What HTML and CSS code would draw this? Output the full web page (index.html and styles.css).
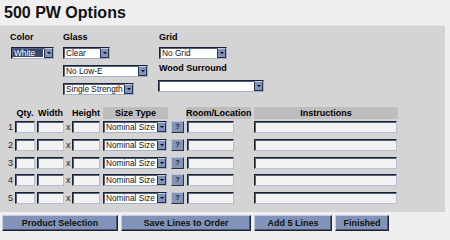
FILE: index.html
```html
<!DOCTYPE html>
<html>
<head>
<meta charset="utf-8">
<title>500 PW Options</title>
<link rel="stylesheet" href="styles.css">
</head>
<body>
<h1 class="title">500 PW Options</h1>
<div class="panel">
  <div class="opts">
    <div class="col col-color">
      <div class="lbl">Color</div>
      <div class="sel sel-color focused"><span class="val">White</span><span class="arr"></span></div>
    </div>
    <div class="col col-glass">
      <div class="lbl">Glass</div>
      <div class="sel sel-clear"><span class="val">Clear</span><span class="arr"></span></div>
      <div class="sel sel-lowe"><span class="val">No Low-E</span><span class="arr"></span></div>
      <div class="sel sel-single"><span class="val">Single Strength</span><span class="arr"></span></div>
    </div>
    <div class="col col-grid">
      <div class="lbl">Grid</div>
      <div class="sel sel-grid"><span class="val">No Grid</span><span class="arr"></span></div>
      <div class="lbl lbl-wood">Wood Surround</div>
      <div class="sel sel-wood"><span class="val"></span><span class="arr"></span></div>
    </div>
  </div>

  <div class="lines">
    <div class="trow thead">
      <span></span>
      <span class="th th-qty">Qty.</span>
      <span class="th th-width">Width</span>
      <span></span>
      <span class="th th-height">Height</span>
      <span class="th dark th-size">Size Type</span>
      <span></span>
      <span class="th dark th-room">Room/Location</span>
      <span class="th dark th-instr">Instructions</span>
    </div>
    <div class="rows">
      <div class="trow">
        <span class="num">1</span>
        <span class="inp in-qty"></span>
        <span class="inp in-width"></span>
        <span class="times">x</span>
        <span class="inp in-height"></span>
        <div class="sel sel-size"><span class="val">Nominal Size</span><span class="arr"></span></div>
        <span class="help">?</span>
        <span class="inp in-room"></span>
        <span class="inp in-instr"></span>
      </div>
      <div class="trow">
        <span class="num">2</span>
        <span class="inp in-qty"></span>
        <span class="inp in-width"></span>
        <span class="times">x</span>
        <span class="inp in-height"></span>
        <div class="sel sel-size"><span class="val">Nominal Size</span><span class="arr"></span></div>
        <span class="help">?</span>
        <span class="inp in-room"></span>
        <span class="inp in-instr"></span>
      </div>
      <div class="trow">
        <span class="num">3</span>
        <span class="inp in-qty"></span>
        <span class="inp in-width"></span>
        <span class="times">x</span>
        <span class="inp in-height"></span>
        <div class="sel sel-size"><span class="val">Nominal Size</span><span class="arr"></span></div>
        <span class="help">?</span>
        <span class="inp in-room"></span>
        <span class="inp in-instr"></span>
      </div>
      <div class="trow">
        <span class="num">4</span>
        <span class="inp in-qty"></span>
        <span class="inp in-width"></span>
        <span class="times">x</span>
        <span class="inp in-height"></span>
        <div class="sel sel-size"><span class="val">Nominal Size</span><span class="arr"></span></div>
        <span class="help">?</span>
        <span class="inp in-room"></span>
        <span class="inp in-instr"></span>
      </div>
      <div class="trow">
        <span class="num">5</span>
        <span class="inp in-qty"></span>
        <span class="inp in-width"></span>
        <span class="times">x</span>
        <span class="inp in-height"></span>
        <div class="sel sel-size"><span class="val">Nominal Size</span><span class="arr"></span></div>
        <span class="help">?</span>
        <span class="inp in-room"></span>
        <span class="inp in-instr"></span>
      </div>
    </div>
  </div>
</div>
<div class="actions">
  <button class="btn btn-product">Product Selection</button>
  <button class="btn btn-save">Save Lines to Order</button>
  <button class="btn btn-add">Add 5 Lines</button>
  <button class="btn btn-finish">Finished</button>
</div>
</body>
</html>
```

FILE: styles.css
```css
html, body {
  margin: 0;
  padding: 0;
}
body {
  width: 450px;
  height: 240px;
  overflow: hidden;
  background: #efefef;
  font-family: "Liberation Sans", Arial, sans-serif;
  color: #000;
}
.title {
  margin: 0;
  height: 25px;
  box-sizing: border-box;
  padding: 3px 0 0 4px;
  font-size: 16px;
  line-height: 19px;
  font-weight: bold;
  color: #111;
}
.panel {
  width: 445px;
  box-sizing: border-box;
  background: #d4d4d4;
  border-top: 1px solid #e2e2e2;
  padding: 6px 0 8px 0;
}
.opts {
  display: flex;
  padding-left: 10px;
}
.col {
  display: flex;
  flex-direction: column;
  align-items: flex-start;
}
.col-color { width: 53px; }
.col-glass { width: 96px; }
.col-glass .sel + .sel { margin-top: 6px; }
.lbl {
  font-size: 9px;
  line-height: 11px;
  font-weight: bold;
  height: 11px;
  margin-bottom: 4px;
}
.lbl-wood {
  margin-top: 4px;
  margin-bottom: 6px;
}

/* fake select */
.sel {
  display: flex;
  height: 12px;
  box-sizing: border-box;
  border: 1px solid;
  border-color: #18223a #a3afc4 #a3afc4 #18223a;
  box-shadow: inset 1px 1px 0 #566179;
  background: #ffffff;
}
.sel .val {
  flex: 1;
  font-size: 8.3px;
  line-height: 10px;
  padding-left: 2px;
  white-space: nowrap;
  overflow: hidden;
  color: #111;
}
.sel .arr {
  width: 9px;
  flex: none;
  box-sizing: border-box;
  background: #8193b9;
  border: 1px solid;
  border-color: #c0c9dc #26324c #26324c #26324c;
  display: flex;
  align-items: center;
  justify-content: center;
}
.sel .arr::after {
  content: "";
  width: 0;
  height: 0;
  border-left: 2px solid transparent;
  border-right: 2px solid transparent;
  border-top: 2px solid #000;
}
.sel.focused .val {
  background: #36486f;
  color: #fff;
  margin: 1px 1px 1px 1px;
  padding-left: 1px;
  line-height: 8px;
}
.sel-color { width: 43px; margin-left: 1px; }
.sel-clear { width: 47px; }
.sel-lowe { width: 85px; }
.sel-single { width: 71px; }
.sel-grid { width: 68px; }
.sel-wood { width: 106px; margin-left: -1px; }

/* line items */
.lines {
  margin-top: 12px;
}
.trow {
  display: grid;
  grid-template-columns: 15px 22px 27px 8px 31px 67px 16px 68px 144px;
  align-items: start;
  height: 12px;
}
.thead {
  margin-bottom: 2px;
}
.th {
  font-size: 9px;
  line-height: 12px;
  height: 12px;
  font-weight: bold;
  text-align: center;
  white-space: nowrap;
}
.th.dark { background: #bdbdbd; }
.th-qty { width: 20px; }
.th-width { width: 27px; }
.th-height { width: 28px; }
.th-size { width: 65px; }
.th-room { width: 65px; }
.th-instr { width: 144px; }

.rows {
  display: flex;
  flex-direction: column;
  gap: 5.75px;
}
.num {
  font-size: 9px;
  line-height: 12px;
  text-align: right;
  padding-right: 2px;
  color: #222;
}
.times {
  font-size: 9px;
  line-height: 13px;
  padding-left: 2px;
  color: #222;
}
.inp {
  display: block;
  height: 12px;
  box-sizing: border-box;
  background: #f2f2f2;
  border: 1px solid;
  border-color: #18222f #b4bfd2 #b4bfd2 #18222f;
  box-shadow: inset 1px 1px 0 #566179;
}
.in-qty { width: 20px; }
.in-width { width: 27px; }
.in-height { width: 28px; }
.in-room { width: 47px; margin-left: 1px; }
.in-instr { width: 143px; }
.sel-size { width: 64px; }
.help {
  width: 13px;
  height: 12px;
  margin-left: 1px;
  box-sizing: border-box;
  background: #8394b9;
  border: 1px solid;
  border-color: #b9c4da #2a3346 #2a3346 #b9c4da;
  font-size: 7.5px;
  line-height: 10px;
  text-align: center;
  font-weight: bold;
  color: #1d2333;
}

/* buttons */
.actions {
  display: flex;
  gap: 3px;
  padding: 3px 0 0 2px;
}
.btn {
  height: 16px;
  box-sizing: border-box;
  margin: 0;
  padding: 0;
  background: #8193b8;
  border: 1px solid;
  border-color: #c3cce0 #1b2130 #1b2130 #c3cce0;
  box-shadow: inset -1px -1px 0 #4e5a73;
  font-family: "Liberation Sans", Arial, sans-serif;
  font-size: 9px;
  line-height: 13px;
  font-weight: bold;
  color: #111;
  text-align: center;
}
.btn-product { width: 116px; }
.btn-save { width: 130px; }
.btn-add { width: 78px; }
.btn-finish { width: 54px; }
```
